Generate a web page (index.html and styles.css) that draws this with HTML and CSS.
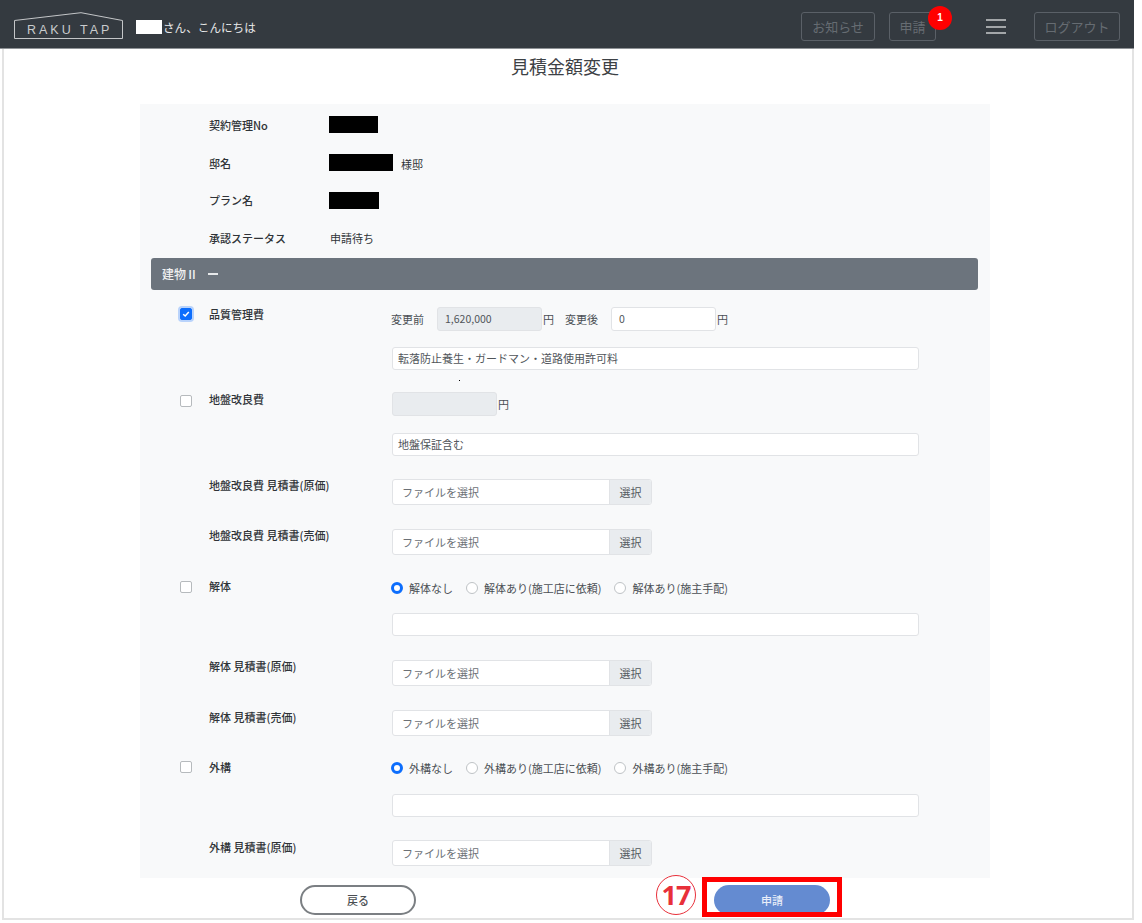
FILE: index.html
```html
<!DOCTYPE html>
<html lang="ja">
<head>
<meta charset="utf-8">
<title>見積金額変更</title>
<link rel="stylesheet" href="styles.css">
</head>
<body>
<div class="page">
  <header class="topbar">
    <svg class="logo" width="110" height="30" viewBox="0 0 110 30">
      <path d="M.5 26.500V8.500L67 .7 108.500 8.500V26.500Z" fill="none" stroke="#c4c6c8" stroke-width="1"/>
      <text x="13" y="22" class="logo-text">RAKU TAP</text>
    </svg>
    <div class="greeting"><span class="mask-white"></span><span>さん、こんにちは</span></div>
    <nav class="topnav">
      <a class="navbtn btn-news">お知らせ</a>
      <a class="navbtn btn-apply">申請<span class="badge">1</span></a>
      <span class="burger"><i></i><i></i><i></i></span>
      <a class="navbtn btn-logout">ログアウト</a>
    </nav>
  </header>
  <main class="main">
    <div class="wrap">
      <h1 class="title">見積金額変更</h1>
      <section class="panel">
        <div class="info"><span class="info-label">契約管理No</span><span class="mask m1"></span></div>
        <div class="info"><span class="info-label">邸名</span><span class="mask m2"></span><span class="suffix">様邸</span></div>
        <div class="info"><span class="info-label">プラン名</span><span class="mask m3"></span></div>
        <div class="info"><span class="info-label">承認ステータス</span><span class="info-value">申請待ち</span></div>
        <div class="section-bar"><span>建物Ⅱ</span><span class="minus"></span></div>

        <div class="row p40">
          <span class="check on"><svg width="8" height="8" viewBox="0 0 8 8"><path d="M1.200 4.200 3.200 6 6.800 2" fill="none" stroke="#fff" stroke-width="1.500"/></svg></span>
          <label class="lbl lo">品質管理費</label>
          <div class="ctrl">
            <span class="unit first">変更前</span><span class="field disabled price">1,620,000</span><span class="unit">円</span>
            <span class="unit after">変更後</span><span class="field price">0</span><span class="unit">円</span>
          </div>
        </div>
        <div class="row p45"><span class="check none"></span><span class="lbl"></span><div class="ctrl"><span class="field wide thin">転落防止養生・ガードマン・道路使用許可料</span></div><i class="dot"></i></div>
        <div class="row p41">
          <span class="check low"></span><label class="lbl lo">地盤改良費</label>
          <div class="ctrl"><span class="field disabled price"></span><span class="unit">円</span></div>
        </div>
        <div class="row p46"><span class="check none"></span><span class="lbl"></span><div class="ctrl"><span class="field wide thin">地盤保証含む</span></div></div>
        <div class="row p50"><span class="check none"></span><label class="lbl">地盤改良費 見積書(原価)</label><div class="ctrl"><span class="file"><span class="file-name">ファイルを選択</span><span class="file-btn">選択</span></span></div></div>
        <div class="row p47"><span class="check none"></span><label class="lbl">地盤改良費 見積書(売価)</label><div class="ctrl"><span class="file"><span class="file-name">ファイルを選択</span><span class="file-btn">選択</span></span></div></div>
        <div class="row p37">
          <span class="check mid"></span><label class="lbl l3">解体</label>
          <div class="ctrl radios">
            <span class="radio on"></span><span class="rlabel">解体なし</span>
            <span class="radio"></span><span class="rlabel">解体あり(施工店に依頼)</span>
            <span class="radio"></span><span class="rlabel">解体あり(施主手配)</span>
          </div>
        </div>
        <div class="row p47"><span class="check none"></span><span class="lbl"></span><div class="ctrl"><span class="field wide thin"></span></div></div>
        <div class="row p50"><span class="check none"></span><label class="lbl">解体 見積書(原価)</label><div class="ctrl"><span class="file"><span class="file-name">ファイルを選択</span><span class="file-btn">選択</span></span></div></div>
        <div class="row p46"><span class="check none"></span><label class="lbl lo">解体 見積書(売価)</label><div class="ctrl"><span class="file"><span class="file-name">ファイルを選択</span><span class="file-btn">選択</span></span></div></div>
        <div class="row p38">
          <span class="check mid"></span><label class="lbl l4">外構</label>
          <div class="ctrl radios">
            <span class="radio on"></span><span class="rlabel">外構なし</span>
            <span class="radio"></span><span class="rlabel">外構あり(施工店に依頼)</span>
            <span class="radio"></span><span class="rlabel">外構あり(施主手配)</span>
          </div>
        </div>
        <div class="row p46"><span class="check none"></span><span class="lbl"></span><div class="ctrl"><span class="field wide thin"></span></div></div>
        <div class="row p38"><span class="check none"></span><label class="lbl lo">外構 見積書(原価)</label><div class="ctrl"><span class="file"><span class="file-name">ファイルを選択</span><span class="file-btn">選択</span></span></div></div>
      </section>
      <footer class="actions">
        <a class="pill back">戻る</a>
        <a class="pill submit">申請
          <span class="annot-box"></span>
          <span class="annot-num">17</span>
        </a>
      </footer>
    </div>
  </main>
</div>
</body>
</html>
```

FILE: styles.css
```css
* { box-sizing: border-box; }
html, body { margin: 0; padding: 0; background: #fff; }
body {
  width: 1142px;
  height: 923px;
  overflow: hidden;
  font-family: "Noto Sans CJK JP", "Noto Sans", sans-serif;
  font-size: 11px;
  color: #3f4347;
}
.page { width: 1134px; height: 920px; display: flex; flex-direction: column; }

/* top bar */
.topbar {
  height: 49px;
  flex: none;
  background: #343a40;
  display: flex;
  align-items: center;
  padding-left: 14px;
  border-bottom: 1px solid #8e9296;
}
.logo { margin-top: 6px; flex: none; }
.logo-text {
  font-family: "Liberation Sans", sans-serif;
  font-size: 12.500px;
  letter-spacing: 3px;
  fill: #c9cbcd;
}
.greeting { display: flex; align-items: center; margin-left: 12px; color: #e8e9ea; font-size: 11.600px; margin-top: 5px; }
.mask-white { width: 26px; height: 14px; background: #fff; margin-right: 1px; }
.topnav { margin-left: auto; display: flex; align-items: center; padding-right: 14px; margin-top: 5px; }
.navbtn {
  position: relative;
  height: 29px;
  display: flex;
  align-items: center;
  justify-content: center;
  border: 1px solid #5a6067;
  border-radius: 3px;
  color: #666c72;
  font-size: 13px;
}
.btn-news { width: 74px; }
.btn-apply { width: 47px; margin-left: 14px; }
.btn-logout { width: 86px; margin-left: 28px; }
.badge {
  position: absolute;
  left: 38px;
  top: -7px;
  width: 24px;
  height: 24px;
  border-radius: 50%;
  background: #f00;
  color: #fff;
  font: 700 10px/24px "Liberation Sans", sans-serif;
  text-align: center;
}
.burger { margin-left: 50px; width: 20px; display: flex; flex-direction: column; gap: 4.500px; }
.burger i { display: block; height: 2px; background: #a3a6a9; }

/* main frame */
.main {
  flex: 1;
  margin-left: 2px;
  border-left: 2px solid #e3e3e3;
  border-right: 2px solid #e3e3e3;
  border-bottom: 2px solid #e3e3e3;
}
.wrap { width: 850px; margin-left: 136px; position: relative; }
.title {
  margin: 0;
  height: 55px;
  padding-top: 4px;
  text-align: center;
  font-size: 18px;
  line-height: 26px;
  font-weight: 400;
  color: #3d4145;
}

/* panel */
.panel { background: #f8f9fa; height: 774px; padding-top: 2px; }
.info { height: 37.700px; display: flex; align-items: center; padding-left: 69px; color: #2f3337; }
.info-label { width: 120px; font-weight: 500; }
.info-value { margin-left: 1px; }
.mask { background: #000; height: 17px; flex: none; }
.m1 { width: 49px; }
.m2 { width: 64px; }
.m3 { width: 50px; }
.suffix { margin-left: 8px; margin-top: 2px; }
.section-bar {
  margin: 1px 12px 0 11px;
  height: 32px;
  background: #6c747d;
  border-radius: 3px;
  color: #f0f1f2;
  display: flex;
  align-items: center;
  padding-left: 11px;
  gap: 10px;
  font-size: 12px;
  font-weight: 500;
}
.minus { width: 10px; height: 1.500px; background: #e6e8ea; }
.section-bar + .row { margin-top: 17px; }

/* form rows */
.row { display: flex; align-items: flex-start; padding-left: 40px; position: relative; }
.p37 { height: 37px; }
.p38 { height: 38px; }
.p40 { height: 40px; }
.p41 { height: 41px; }
.p45 { height: 45px; }
.p46 { height: 46px; }
.p47 { height: 47px; }
.p50 { height: 50px; }
.check {
  width: 12px;
  height: 12px;
  flex: none;
  margin-top: 1px;
  background: #fff;
  border: 1px solid #b6babd;
  border-radius: 2px;
  display: flex;
  align-items: center;
  justify-content: center;
}
.check.low { margin-top: 3px; }
.check.mid { margin-top: 5px; }
.check.on { background: #0d6efd; border-color: #0d6efd; box-shadow: 0 0 0 2px #b9d3fb; }
.check.none { visibility: hidden; }
.lbl { width: 183px; margin-left: 17px; flex: none; font-weight: 500; line-height: 14px; color: #2f3337; margin-top: -1px; }
.lbl.lo { margin-top: 0; }
.lbl.l3 { margin-top: 3px; }
.lbl.l4 { margin-top: 4px; }
.ctrl { display: flex; align-items: center; color: #4a4f54; }
.unit { margin-left: 1px; font-size: 11px; }
.unit.first { margin-left: -1px; margin-right: 13px; }
.unit.after { margin-left: 11px; margin-right: 13px; }
.field {
  display: flex;
  align-items: center;
  height: 24px;
  background: #fff;
  border: 1px solid #e1e3e6;
  border-radius: 3px;
  padding: 0 7px;
  color: #50555a;
  font-size: 10.500px;
}
.price { width: 105px; }
.disabled { background: #e9ecef; }
.wide { width: 527px; padding: 0 5px; font-size: 11px; }
.thin { height: 23px; }
.dot { position: absolute; left: 319px; top: 33px; width: 1px; height: 1px; background: #000; }
.file { display: flex; width: 260px; height: 26px; border: 1px solid #e1e3e6; border-radius: 3px; background: #fff; overflow: hidden; }
.file-name { flex: 1; padding-left: 9px; line-height: 24px; font-size: 11px; color: #6b7076; }
.file-btn { width: 42px; background: #e9ecef; text-align: center; line-height: 24px; font-size: 11px; color: #54595e; border-left: 1px solid #e1e3e6; }
.radios { height: 24px; margin-left: -1px; }
.radio { width: 12px; height: 12px; border-radius: 50%; border: 1px solid #bfc3c6; background: #fff; flex: none; }
.radio.on { border: 3.500px solid #0d6efd; }
.rlabel { margin: 0 13px 0 6px; font-size: 11px; }

/* footer */
.actions { display: flex; padding-left: 160px; padding-top: 7px; }
.pill {
  width: 116px;
  height: 30px;
  display: flex;
  align-items: center;
  justify-content: center;
  border-radius: 15px;
  font-size: 11px;
  font-weight: 500;
}
.back { border: 2px solid #7b7f83; background: #fff; color: #4a4e52; }
.submit { position: relative; margin-left: 298px; background: #648bd1; color: #e9eef8; }
.annot-box { position: absolute; left: -12px; top: -8px; width: 140px; height: 40px; border: 5px solid #f00; }
.annot-num {
  position: absolute;
  left: -58px;
  top: -10px;
  width: 40px;
  height: 40px;
  border: 1px solid #e8303a;
  border-radius: 50%;
  background: #fff;
  color: #e8303a;
  text-align: center;
  font: 700 27px/37px "Open Sans", "Noto Sans", sans-serif;
  letter-spacing: -1px;
}
```
